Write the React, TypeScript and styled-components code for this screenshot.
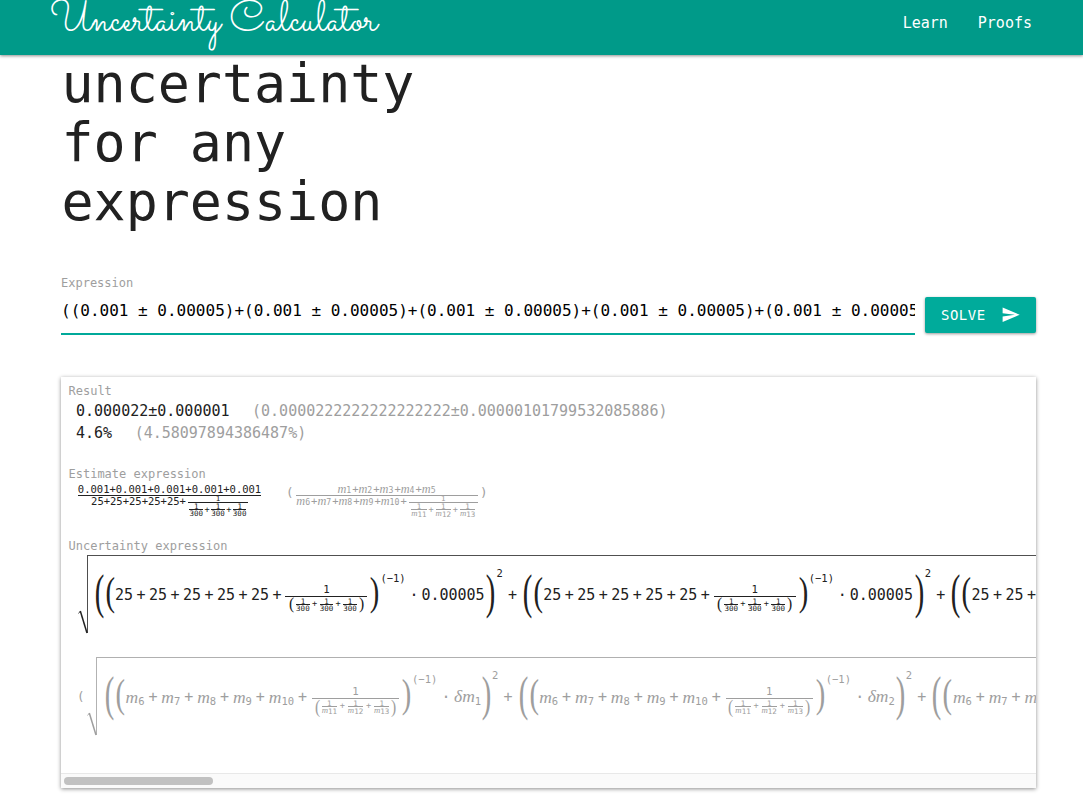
import React from "react";
import styled, { createGlobalStyle } from "styled-components";
import { MdSend } from "react-icons/md";

const GlobalStyle = createGlobalStyle`
  *, *::before, *::after { box-sizing: border-box; }
  html, body { margin: 0; height: 803px; overflow: hidden; background: #fff; }
  body { font-family: "DejaVu Sans Mono", monospace; color: #212121; font-size: 15px; }
`;

const Header = styled.header`
  position: relative;
  z-index: 2;
  display: flex;
  justify-content: space-between;
  height: 55px;
  padding: 0 51px 0 50px;
  background: #009a89;
  color: #fff;
  box-shadow: 0 1px 3px rgba(0, 0, 0, 0.45);
`;

const Brand = styled.a`
  font-family: "Sacramento", cursive;
  font-size: 42px;
  line-height: 43px;
  white-space: nowrap;
`;

const Nav = styled.nav`
  display: flex;
  gap: 30px;
  line-height: 46px;
`;

const Page = styled.main`
  width: 975px;
  margin-left: 61px;
`;

const Title = styled.h1`
  margin: -59px 0 0;
  padding-left: 0.5px;
  font-size: 53.3px;
  font-weight: 400;
  line-height: 59px;
`;

const Form = styled.form`
  display: flex;
  gap: 10px;
  margin-top: 43px;
`;

const Field = styled.label`
  width: 854px;
  height: 60px;
  border-bottom: 2px solid #00a99a;
`;

const FieldLabel = styled.span`
  display: block;
  font-size: 12px;
  line-height: 16px;
  color: #9e9e9e;
`;

const FieldValue = styled.div`
  overflow: hidden;
  margin-top: 8px;
  font-size: 16px;
  line-height: 24px;
  white-space: nowrap;
  color: #000;
`;

const SolveButton = styled.button`
  display: flex;
  align-items: center;
  justify-content: space-between;
  width: 111px;
  height: 36px;
  margin-top: 22px;
  padding: 0 16px;
  border: 0;
  border-radius: 2px;
  background: #00ab9b;
  color: #fff;
  font: 14px "DejaVu Sans Mono", monospace;
  letter-spacing: 0.5px;
  box-shadow: 0 1px 3px rgba(0, 0, 0, 0.4);
`;

const Card = styled.section`
  display: flex;
  flex-direction: column;
  height: 411px;
  margin-top: 42px;
  overflow: hidden;
  box-shadow: 0 1px 4px rgba(0, 0, 0, 0.45);
  background: #fff;
`;

const CardBody = styled.div`
  flex: 1;
  min-height: 0;
  overflow: hidden;
  padding: 6px 0 0 7.5px;
`;

const SectionLabel = styled.div<{ $top?: number }>`
  margin-top: ${(p) => p.$top ?? 0}px;
  font-size: 12px;
  line-height: 16px;
  color: #9e9e9e;
`;

const Results = styled.div`
  padding: 1px 0 0 7.5px;
`;

const ResultLine = styled.div`
  display: flex;
  gap: 22.5px;
  line-height: 22px;
`;

const Muted = styled.span`
  color: #9e9e9e;
`;

const EstimateRow = styled.div`
  display: flex;
  align-items: flex-start;
  gap: 25px;
  height: 56px;
  padding: 2px 0 0 9.5px;
`;

const Inline = styled.div<{ $muted?: boolean }>`
  display: flex;
  align-items: flex-start;
  color: ${(p) => (p.$muted ? "#9e9e9e" : "#212121")};
`;

const OuterParen = styled.span<{ $close?: boolean }>`
  width: 10px;
  padding-left: ${(p) => (p.$close ? 2 : 0)}px;
  font-size: 12.5px;
  line-height: 18px;
`;

const Ratio = styled.div<{ $width: number }>`
  --sub-size: 0.78em;
  --sub-drop: 0.15em;
  --sub-gap: 1px;
  width: ${(p) => p.$width}px;
  font-size: 10.5px;
`;

const RatioTop = styled.div`
  display: flex;
  justify-content: center;
  height: 12px;
  line-height: 11px;
  border-bottom: 1px solid currentColor;
`;

const RatioBottom = styled.div`
  display: flex;
  justify-content: center;
  line-height: 11px;
`;

const Nested = styled.div<{ $width: number }>`
  width: ${(p) => p.$width}px;
  margin-left: 2px;
  font-size: 7.5px;
`;

const NestedTop = styled.div`
  height: 7px;
  line-height: 5px;
  text-align: center;
  border-bottom: 1px solid currentColor;
`;

const SmallSum = styled.div<{ $gap: number }>`
  display: flex;
  align-items: center;
  justify-content: center;
  gap: ${(p) => p.$gap}px;
  font-size: 7.5px;
  line-height: 9px;
`;

const SmallFraction = styled.span`
  --sub-size: 1em;
  --sub-drop: 0.18em;
  --sub-gap: 0px;
  display: flex;
  flex-direction: column;
  align-items: center;
  line-height: 7px;

  > :first-child {
    align-self: stretch;
    height: 7px;
    text-align: center;
    line-height: 7px;
    border-bottom: 1px solid currentColor;
  }
`;

const Variable = styled.span`
  display: inline-flex;
  align-items: flex-start;
  height: 1lh;
  white-space: nowrap;
`;

const Letter = styled.i`
  font-family: "Liberation Serif", serif;
  font-size: 1.17em;
`;

const Subscript = styled.span`
  margin-top: var(--sub-drop, 0.46em);
  margin-right: var(--sub-gap, 0px);
  font-size: var(--sub-size, 0.7em);
`;

const RootRow = styled.div<{ $muted?: boolean }>`
  display: flex;
  align-items: flex-start;
  height: ${(p) => (p.$muted ? 82 : 102)}px;
  margin-top: ${(p) => (p.$muted ? 0 : 1)}px;
  padding-left: ${(p) => (p.$muted ? 8.5 : 9)}px;
  color: ${(p) => (p.$muted ? "#9e9e9e" : "#212121")};
`;

const RootParen = styled.span`
  flex: none;
  width: 10px;
  font-size: 12.5px;
  line-height: 79px;
`;

const Surd = styled.svg`
  flex: none;
  display: block;
`;

const Radicand = styled.div<{ $muted?: boolean }>`
  flex: none;
  display: flex;
  align-items: center;
  width: 1300px;
  height: 82px;
  padding-left: ${(p) => (p.$muted ? 7 : 6)}px;
  border-top: 1px solid ${(p) => (p.$muted ? "#b0b0b0" : "#505050")};
`;

const Term = styled.div<{ $width: number }>`
  flex: none;
  display: flex;
  align-items: center;
  width: ${(p) => p.$width}px;
  height: 82px;
`;

const Delimiter = styled.span<{ $ink: number; $width: number }>`
  --size: ${(p) => (p.$ink > 30 ? 22 : 12)};
  flex: none;
  display: flex;
  align-items: center;
  justify-content: center;
  width: ${(p) => p.$width}px;
  height: ${(p) => p.$ink}px;
  font-family: "Liberation Serif", serif;
  font-size: calc(var(--size) * 1px);
  line-height: 1;
  transform: translateY(${(p) => -0.115 * p.$ink}px)
    scale(1.3, calc(${(p) => p.$ink} / 0.91 / var(--size)));
`;

const Sum = styled.div<{ $gap: number }>`
  flex: none;
  display: flex;
  align-items: center;
  gap: ${(p) => p.$gap}px;
  line-height: 18px;
  padding-bottom: 4px;
`;

const Fraction = styled.div<{ $width: number; $before: number }>`
  flex: none;
  display: grid;
  grid-template-rows: 18px 18px;
  width: ${(p) => p.$width}px;
  margin: 0 2px 0 ${(p) => p.$before}px;
`;

const Numerator = styled.div`
  display: flex;
  align-items: flex-end;
  justify-content: center;
  font-size: 10.7px;
  line-height: 12px;
  border-bottom: 1px solid currentColor;
`;

const Denominator = styled.div`
  display: flex;
  align-items: flex-start;
  justify-content: center;
  gap: 1px;

  ${SmallSum} {
    padding-top: 1px;
  }
`;

const SmallPlus = styled.span`
  ${SmallSum} > & {
    font-size: 8.6px;
  }
`;

const Exponent = styled.span<{ $width: number; $drop: number }>`
  flex: none;
  align-self: flex-start;
  width: ${(p) => p.$width}px;
  padding-top: ${(p) => p.$drop}px;
  font-size: 10.5px;
  line-height: 12px;
`;

const Operator = styled.span<{ $width: number }>`
  flex: none;
  width: ${(p) => p.$width}px;
  padding-bottom: 3px;
  text-align: center;
`;

const Factor = styled.span<{ $width: number }>`
  flex: none;
  width: ${(p) => p.$width}px;
  padding-bottom: 4px;
  line-height: 18px;
  white-space: nowrap;
`;

const ScrollTrack = styled.div`
  height: 15px;
  padding: 3px;
  border-top: 1px solid #e8e8e8;
  background: #fafafa;
`;

const ScrollThumb = styled.div`
  width: 149px;
  height: 8px;
  border-radius: 4px;
  background: #c1c1c1;
`;

const Var = ({ n, delta }: { n: number; delta?: boolean }) => (
  <Variable>
    <Letter>{delta ? "δm" : "m"}</Letter>
    <Subscript>{n}</Subscript>
  </Variable>
);

const interleave = (items: React.ReactNode[]) =>
  items.map((item, i) => (
    <React.Fragment key={i}>
      {i > 0 && <SmallPlus>+</SmallPlus>}
      {item}
    </React.Fragment>
  ));

const Reciprocals = ({ symbolic, gap }: { symbolic?: boolean; gap: number }) => (
  <SmallSum $gap={gap}>
    {interleave(
      [11, 12, 13].map((n) => (
        <SmallFraction key={n}>
          <span>1</span>
          {symbolic ? <Var n={n} /> : <span>300</span>}
        </SmallFraction>
      )),
    )}
  </SmallSum>
);

const SquaredTerm = ({ symbolic, index }: { symbolic?: boolean; index: number }) => (
  <Term $width={symbolic ? 413.7 : 428.3}>
    <Delimiter $ink={45} $width={11}>(</Delimiter>
    <Delimiter $ink={36} $width={10.5}>(</Delimiter>
    <Sum $gap={symbolic ? 3.9 : 3.45}>
      {interleave(
        symbolic
          ? [6, 7, 8, 9, 10].map((n) => <Var key={n} n={n} />)
          : Array(5).fill("25"),
      )}
      <span>+</span>
    </Sum>
    <Fraction $width={symbolic ? 87 : 82} $before={symbolic ? 5 : 4}>
      <Numerator>1</Numerator>
      <Denominator>
        <Delimiter $ink={symbolic ? 18 : 15} $width={7}>(</Delimiter>
        <Reciprocals symbolic={symbolic} gap={symbolic ? 2.8 : 2.4} />
        <Delimiter $ink={symbolic ? 18 : 15} $width={7}>)</Delimiter>
      </Denominator>
    </Fraction>
    <Delimiter $ink={36} $width={11}>)</Delimiter>
    <Exponent $width={26} $drop={symbolic ? 15 : 16}>(−1)</Exponent>
    <Operator $width={symbolic ? 16 : 15}>·</Operator>
    <Factor $width={symbolic ? 27 : 64}>
      {symbolic ? <Var n={index} delta /> : "0.00005"}
    </Factor>
    <Delimiter $ink={45} $width={11}>)</Delimiter>
    <Exponent $width={10} $drop={symbolic ? 11 : 11.4}>2</Exponent>
    <Operator $width={12}>+</Operator>
  </Term>
);

const Root = ({ symbolic }: { symbolic?: boolean }) => (
  <RootRow $muted={symbolic}>
    {symbolic && <RootParen>(</RootParen>}
    <Surd width="10" height="80" viewBox="0 0 10 80" fill="none" stroke="currentColor">
      <path d="M0.5 58.5L2.5 56" strokeWidth="0.8" />
      <path d="M2.3 56L9 78" strokeWidth="1.5" />
      <path d="M9.5 78V0" strokeWidth="0.8" />
    </Surd>
    <Radicand $muted={symbolic}>
      {[1, 2, 3].map((n) => (
        <SquaredTerm key={n} index={n} symbolic={symbolic} />
      ))}
    </Radicand>
  </RootRow>
);

const expression = "(" + Array(5).fill("(0.001 ± 0.00005)").join("+") + ")";

export default function App() {
  return (
    <>
      <GlobalStyle />
      <Header>
        <Brand>Uncertainty Calculator</Brand>
        <Nav>
          <span>Learn</span>
          <span>Proofs</span>
        </Nav>
      </Header>
      <Page>
        <Title>
          Propagate<br />uncertainty<br />for any<br />expression
        </Title>
        <Form>
          <Field>
            <FieldLabel>Expression</FieldLabel>
            <FieldValue>{expression}</FieldValue>
          </Field>
          <SolveButton type="button">
            SOLVE <MdSend size={19.5} />
          </SolveButton>
        </Form>
        <Card>
          <CardBody>
            <SectionLabel>Result</SectionLabel>
            <Results>
              <ResultLine>
                <span>0.000022±0.000001</span>
                <Muted>(0.0000222222222222222±0.00000101799532085886)</Muted>
              </ResultLine>
              <ResultLine>
                <span>4.6%</span>
                <Muted>(4.58097894386487%)</Muted>
              </ResultLine>
            </Results>
            <SectionLabel $top={22}>Estimate expression</SectionLabel>
            <EstimateRow>
              <Inline>
                <Ratio $width={183}>
                  <RatioTop>0.001+0.001+0.001+0.001+0.001</RatioTop>
                  <RatioBottom>
                    25+25+25+25+25+
                    <Nested $width={60}>
                      <NestedTop>1</NestedTop>
                      <Reciprocals gap={1.5} />
                    </Nested>
                  </RatioBottom>
                </Ratio>
              </Inline>
              <Inline $muted>
                <OuterParen>(</OuterParen>
                <Ratio $width={182}>
                  <RatioTop>{interleave([1, 2, 3, 4, 5].map((n) => <Var key={n} n={n} />))}</RatioTop>
                  <RatioBottom>
                    {interleave([6, 7, 8, 9, 10].map((n) => <Var key={n} n={n} />))}
                    <span>+</span>
                    <Nested $width={69}>
                      <NestedTop>1</NestedTop>
                      <Reciprocals symbolic gap={1.9} />
                    </Nested>
                  </RatioBottom>
                </Ratio>
                <OuterParen $close>)</OuterParen>
              </Inline>
            </EstimateRow>
            <SectionLabel>Uncertainty expression</SectionLabel>
            <Root />
            <Root symbolic />
          </CardBody>
          <ScrollTrack>
            <ScrollThumb />
          </ScrollTrack>
        </Card>
      </Page>
    </>
  );
}
